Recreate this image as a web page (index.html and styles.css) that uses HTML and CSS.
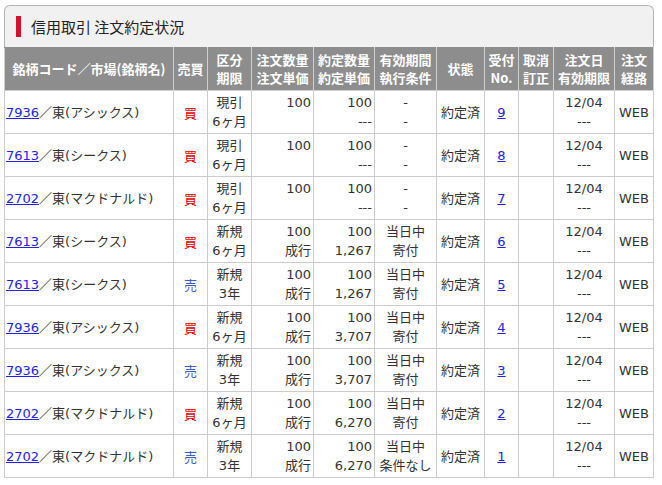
FILE: index.html
```html
<!DOCTYPE html>
<html lang="ja">
<head>
<meta charset="utf-8">
<title>信用取引 注文約定状況</title>
<link rel="stylesheet" href="styles.css">
</head>
<body>
<div class="panel">
  <div class="panel-title"><span class="accent"></span><h1>信用取引 注文約定状況</h1></div>
  <table class="orders">
    <colgroup>
      <col class="c-name"><col class="c-side"><col class="c-kind"><col class="c-qty"><col class="c-exec">
      <col class="c-cond"><col class="c-state"><col class="c-no"><col class="c-cancel"><col class="c-date"><col class="c-route">
    </colgroup>
    <thead>
      <tr>
        <th>銘柄コード／市場(銘柄名)</th>
        <th>売買</th>
        <th>区分<br>期限</th>
        <th>注文数量<br>注文単価</th>
        <th>約定数量<br>約定単価</th>
        <th>有効期間<br>執行条件</th>
        <th>状態</th>
        <th>受付<br>No.</th>
        <th>取消<br>訂正</th>
        <th>注文日<br>有効期限</th>
        <th>注文<br>経路</th>
      </tr>
    </thead>
    <tbody>
      <tr>
        <td class="name"><a href="#">7936</a>／東(アシックス)</td>
        <td class="side buy">買</td>
        <td class="ctr">現引<br>6ヶ月</td>
        <td class="num">100<br>&nbsp;</td>
        <td class="num">100<br>---</td>
        <td class="ctr">-<br>-</td>
        <td class="ctr">約定済</td>
        <td class="ctr"><a href="#">9</a></td>
        <td></td>
        <td class="ctr">12/04<br>---</td>
        <td class="ctr">WEB</td>
      </tr>
      <tr>
        <td class="name"><a href="#">7613</a>／東(シークス)</td>
        <td class="side buy">買</td>
        <td class="ctr">現引<br>6ヶ月</td>
        <td class="num">100<br>&nbsp;</td>
        <td class="num">100<br>---</td>
        <td class="ctr">-<br>-</td>
        <td class="ctr">約定済</td>
        <td class="ctr"><a href="#">8</a></td>
        <td></td>
        <td class="ctr">12/04<br>---</td>
        <td class="ctr">WEB</td>
      </tr>
      <tr>
        <td class="name"><a href="#">2702</a>／東(マクドナルド)</td>
        <td class="side buy">買</td>
        <td class="ctr">現引<br>6ヶ月</td>
        <td class="num">100<br>&nbsp;</td>
        <td class="num">100<br>---</td>
        <td class="ctr">-<br>-</td>
        <td class="ctr">約定済</td>
        <td class="ctr"><a href="#">7</a></td>
        <td></td>
        <td class="ctr">12/04<br>---</td>
        <td class="ctr">WEB</td>
      </tr>
      <tr>
        <td class="name"><a href="#">7613</a>／東(シークス)</td>
        <td class="side buy">買</td>
        <td class="ctr">新規<br>6ヶ月</td>
        <td class="num">100<br>成行</td>
        <td class="num">100<br>1,267</td>
        <td class="ctr">当日中<br>寄付</td>
        <td class="ctr">約定済</td>
        <td class="ctr"><a href="#">6</a></td>
        <td></td>
        <td class="ctr">12/04<br>---</td>
        <td class="ctr">WEB</td>
      </tr>
      <tr>
        <td class="name"><a href="#">7613</a>／東(シークス)</td>
        <td class="side sell">売</td>
        <td class="ctr">新規<br>3年</td>
        <td class="num">100<br>成行</td>
        <td class="num">100<br>1,267</td>
        <td class="ctr">当日中<br>寄付</td>
        <td class="ctr">約定済</td>
        <td class="ctr"><a href="#">5</a></td>
        <td></td>
        <td class="ctr">12/04<br>---</td>
        <td class="ctr">WEB</td>
      </tr>
      <tr>
        <td class="name"><a href="#">7936</a>／東(アシックス)</td>
        <td class="side buy">買</td>
        <td class="ctr">新規<br>6ヶ月</td>
        <td class="num">100<br>成行</td>
        <td class="num">100<br>3,707</td>
        <td class="ctr">当日中<br>寄付</td>
        <td class="ctr">約定済</td>
        <td class="ctr"><a href="#">4</a></td>
        <td></td>
        <td class="ctr">12/04<br>---</td>
        <td class="ctr">WEB</td>
      </tr>
      <tr>
        <td class="name"><a href="#">7936</a>／東(アシックス)</td>
        <td class="side sell">売</td>
        <td class="ctr">新規<br>3年</td>
        <td class="num">100<br>成行</td>
        <td class="num">100<br>3,707</td>
        <td class="ctr">当日中<br>寄付</td>
        <td class="ctr">約定済</td>
        <td class="ctr"><a href="#">3</a></td>
        <td></td>
        <td class="ctr">12/04<br>---</td>
        <td class="ctr">WEB</td>
      </tr>
      <tr>
        <td class="name"><a href="#">2702</a>／東(マクドナルド)</td>
        <td class="side buy">買</td>
        <td class="ctr">新規<br>6ヶ月</td>
        <td class="num">100<br>成行</td>
        <td class="num">100<br>6,270</td>
        <td class="ctr">当日中<br>寄付</td>
        <td class="ctr">約定済</td>
        <td class="ctr"><a href="#">2</a></td>
        <td></td>
        <td class="ctr">12/04<br>---</td>
        <td class="ctr">WEB</td>
      </tr>
      <tr>
        <td class="name"><a href="#">2702</a>／東(マクドナルド)</td>
        <td class="side sell">売</td>
        <td class="ctr">新規<br>3年</td>
        <td class="num">100<br>成行</td>
        <td class="num">100<br>6,270</td>
        <td class="ctr">当日中<br>条件なし</td>
        <td class="ctr">約定済</td>
        <td class="ctr"><a href="#">1</a></td>
        <td></td>
        <td class="ctr">12/04<br>---</td>
        <td class="ctr">WEB</td>
      </tr>
    </tbody>
  </table>
</div>
</body>
</html>
```

FILE: styles.css
```css
html, body {
  margin: 0;
  padding: 0;
  background: #fff;
}

body {
  font-family: "DejaVu Sans", "Noto Sans CJK JP", sans-serif;
  font-size: 13px;
  color: #333;
}

.panel {
  width: 650px;
  margin: 5px 0 0 4px;
}

.panel-title {
  display: flex;
  align-items: center;
  height: 41px;
  border: 1px solid #b4b4b4;
  border-bottom: none;
  border-radius: 6px 6px 0 0;
  background: #f1f1f1;
  box-sizing: content-box;
  width: 648px;
}

.accent {
  width: 5px;
  height: 21px;
  margin-left: 11px;
  margin-right: 10px;
  background: #d5102b;
}

.panel-title h1 {
  margin: 0;
  font-family: "Noto Sans CJK JP", sans-serif;
  font-size: 15px;
  font-weight: normal;
  color: #222;
  line-height: 20px;
}

.orders {
  width: 650px;
  border-collapse: collapse;
  table-layout: fixed;
}

.c-name { width: 169px; }
.c-side { width: 34px; }
.c-kind { width: 44px; }
.c-qty { width: 62px; }
.c-exec { width: 61px; }
.c-cond { width: 62px; }
.c-state { width: 48px; }
.c-no { width: 34px; }
.c-cancel { width: 35px; }
.c-date { width: 61px; }
.c-route { width: 39px; }

.orders th {
  background: #8d8d8d;
  color: #fff;
  font-family: "Noto Sans CJK JP", sans-serif;
  font-weight: bold;
  font-size: 13px;
  line-height: 18px;
  height: 42px;
  padding: 0;
  border: 1px solid #cfcfcf;
  border-top-color: #8d8d8d;
  text-align: center;
  vertical-align: middle;
  white-space: nowrap;
}

.orders td {
  height: 42px;
  padding: 0 2px;
  border: 1px solid #cccccc;
  line-height: 19px;
  vertical-align: middle;
  white-space: nowrap;
}

.orders td.name {
  padding-left: 1px;
  text-align: left;
}

.orders td.ctr {
  text-align: center;
}

.orders td.num {
  text-align: right;
  padding-right: 2px;
}

.orders td.side {
  text-align: center;
  font-family: "Noto Sans CJK JP", sans-serif;
}

.buy { color: #e50000; }
.sell { color: #3a5ccc; }

.orders a {
  color: #2323e6;
  text-decoration: underline;
}
```
